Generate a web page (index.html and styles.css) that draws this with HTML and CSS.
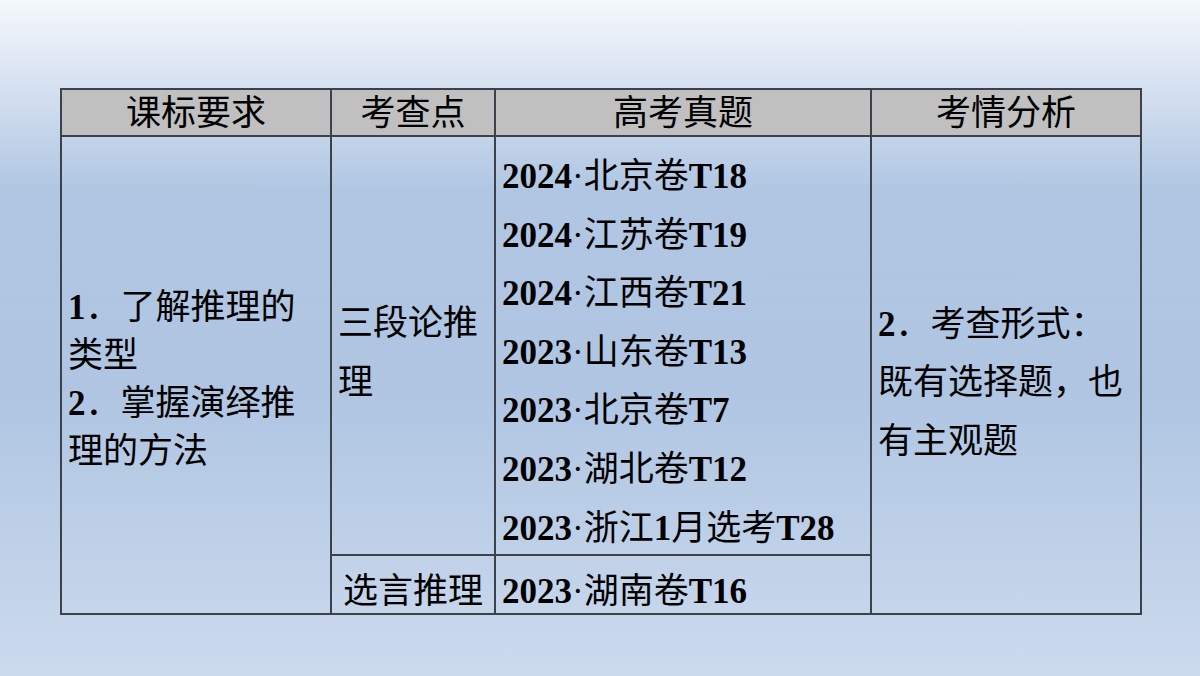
FILE: index.html
```html
<!DOCTYPE html>
<html lang="zh-CN">
<head>
<meta charset="utf-8">
<title>推理</title>
<link rel="stylesheet" href="styles.css">
</head>
<body>
<main class="slide">
  <table class="grid">
    <colgroup>
      <col class="c1"><col class="c2"><col class="c3"><col class="c4">
    </colgroup>
    <thead>
      <tr class="head">
        <th>课标要求</th>
        <th>考查点</th>
        <th>高考真题</th>
        <th>考情分析</th>
      </tr>
    </thead>
    <tbody>
      <tr class="r1">
        <td rowspan="2" class="req"><b>1</b>．了解推理的<br>类型<br><b>2</b>．掌握演绎推<br>理的方法</td>
        <td class="point">三段论推<br>理</td>
        <td class="exam"><div class="lines"><b>2024</b>·北京卷<b>T18</b><br><b>2024</b>·江苏卷<b>T19</b><br><b>2024</b>·江西卷<b>T21</b><br><b>2023</b>·山东卷<b>T13</b><br><b>2023</b>·北京卷<b>T7</b><br><b>2023</b>·湖北卷<b>T12</b><br><b>2023</b>·浙江<b>1</b>月选考<b>T28</b></div></td>
        <td rowspan="2" class="ana"><b>2</b>．考查形式：<br>既有选择题，也<br>有主观题</td>
      </tr>
      <tr class="r2">
        <td class="point single"><div class="one">选言推理</div></td>
        <td class="exam single"><div class="one"><b>2023</b>·湖南卷<b>T16</b></div></td>
      </tr>
    </tbody>
  </table>
</main>
</body>
</html>
```
FILE: styles.css
```css
html, body {
  margin: 0;
  padding: 0;
  width: 1200px;
  height: 676px;
  overflow: hidden;
}

body {
  background: linear-gradient(to bottom, #f5f8fc 0px, #b0c6e2 190px, #afc5e2 390px, #ccdaed 676px);
  font-family: "Liberation Serif", "Noto Sans CJK SC", serif;
  color: #000;
}

.slide {
  padding: 88px 0 0 60px;
}

.grid {
  border-collapse: collapse;
  table-layout: fixed;
  width: 1082px;
  font-size: 35px;
}

.grid col.c1 { width: 270px; }
.grid col.c2 { width: 164px; }
.grid col.c3 { width: 376px; }
.grid col.c4 { width: 270px; }

.grid th,
.grid td {
  border: 2px solid #3d424a;
  padding: 0 6px;
  text-align: left;
  white-space: nowrap;
  overflow: hidden;
}

.grid b {
  font-weight: 700;
}

.head {
  height: 47px;
}

.grid .head th {
  background: #c0c0c0;
  font-weight: 400;
  text-align: center;
  line-height: 43px;
  padding-top: 2px;
}

.r1 {
  height: 419px;
}

.r2 {
  height: 59px;
}

.grid td.req {
  vertical-align: middle;
  line-height: 48px;
  padding-top: 9px;
}

.grid td.point {
  vertical-align: middle;
  line-height: 59.5px;
  padding-top: 15px;
}

.grid td.exam {
  vertical-align: top;
  line-height: 58.6px;
  padding-top: 11px;
}

.exam .lines {
  height: 400px;
}

.grid td.ana {
  vertical-align: middle;
  line-height: 58.5px;
  padding-top: 17px;
}

.grid td.single {
  vertical-align: top;
  line-height: 44px;
  padding-top: 14px;
}

.single .one {
  height: 42px;
}

.grid td.point.single {
  text-align: center;
}
```
